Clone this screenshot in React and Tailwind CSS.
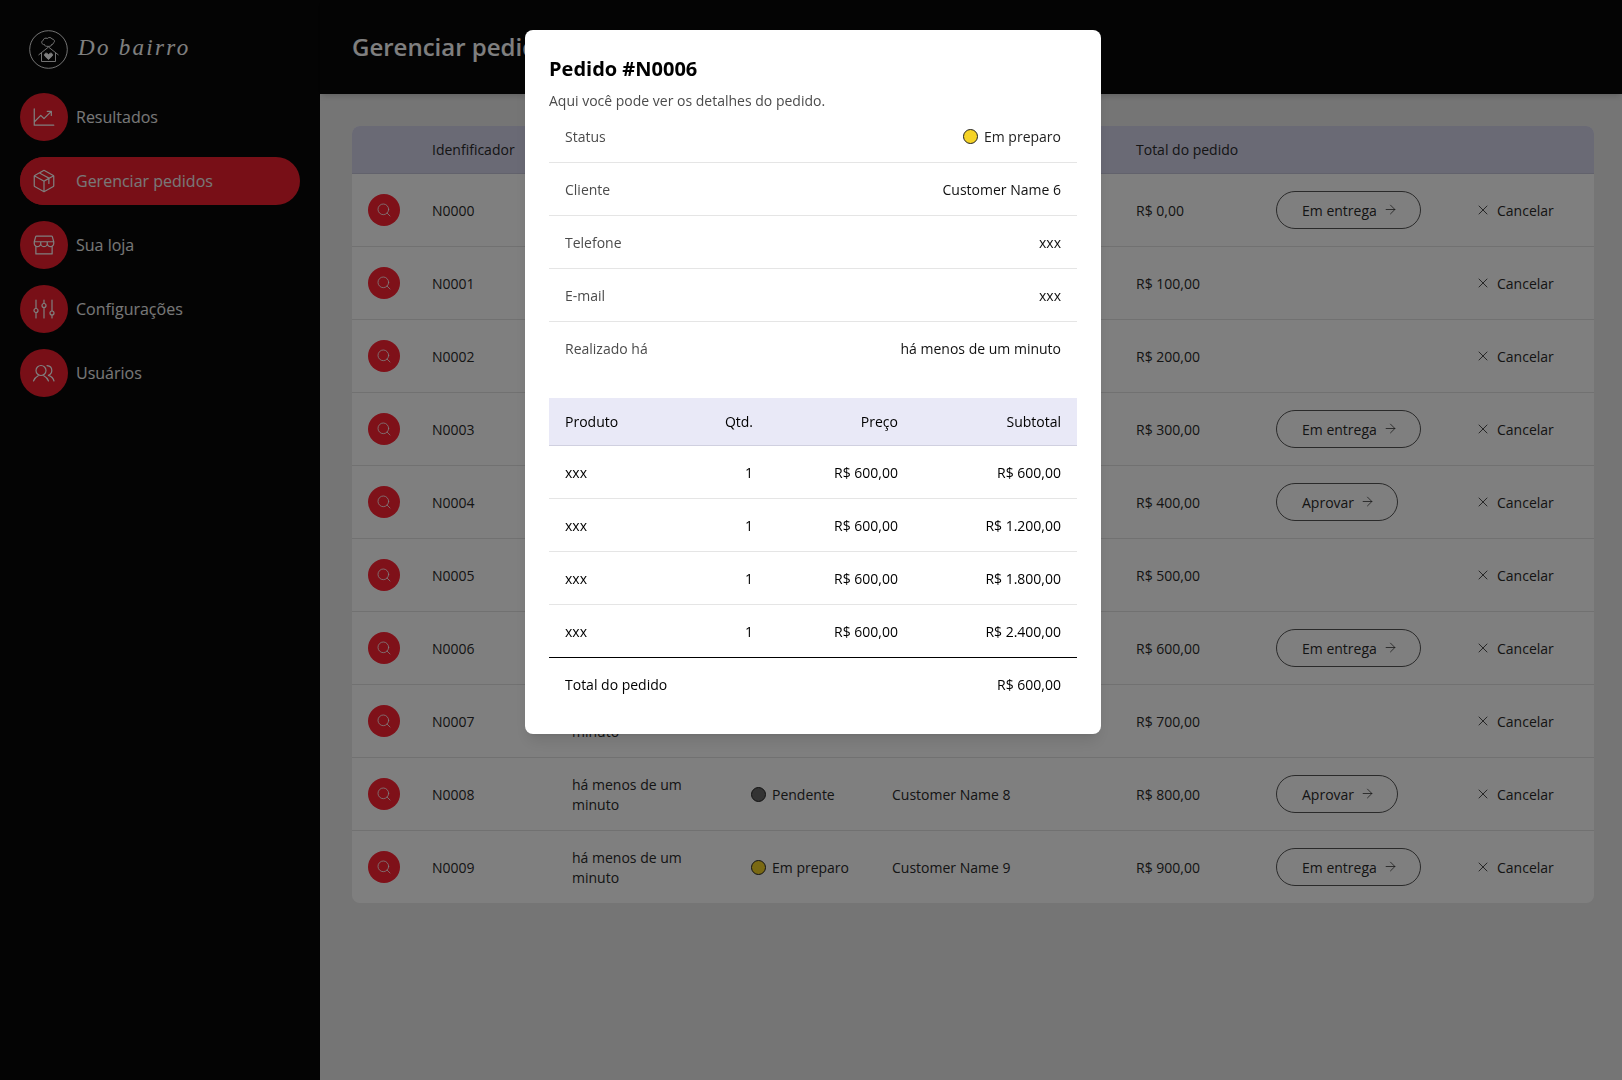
import React from "react";
import { Search, X, ArrowRight } from "lucide-react";
import { PiChartLineUpLight, PiPackageLight, PiStorefrontLight } from "react-icons/pi";

function SlidersIcon() {
  return (
    <svg width="24" height="24" viewBox="0 0 24 24" fill="none" stroke="currentColor" strokeWidth="1.2" strokeLinecap="round">
      <path d="M4 3v8.500M4 15.500V21M12 3v3.500M12 10.500V21M20 3v11M20 18v3" />
      <circle cx="4" cy="13.500" r="2" />
      <circle cx="12" cy="8.500" r="2" />
      <circle cx="20" cy="16" r="2" />
    </svg>
  );
}

function UsersIcon() {
  return (
    <svg width="24" height="24" viewBox="0 0 24 24" fill="none" stroke="currentColor" strokeWidth="1.2" strokeLinecap="round" strokeLinejoin="round">
      <circle cx="9" cy="9.500" r="5" />
      <path d="M1.500 20c.8-2.600 3-4.400 4.700-5.300M16.500 20c-.8-2.600-3-4.400-4.700-5.300" />
      <path d="M15 4.600c2.800.2 4.800 2.300 4.800 4.900 0 2.200-1.400 4-3.400 4.800 2.700.8 4.900 2.700 5.600 5.700" />
    </svg>
  );
}

const navItems = [
  { label: "Resultados", icon: <PiChartLineUpLight size={26} /> },
  { label: "Gerenciar pedidos", icon: <PiPackageLight size={26} />, active: true },
  { label: "Sua loja", icon: <PiStorefrontLight size={26} /> },
  { label: "Configurações", icon: <SlidersIcon /> },
  { label: "Usuários", icon: <UsersIcon /> },
];

const orders = [
  { id: "N0000", status: "Em preparo", action: "Em entrega", total: "R$ 0,00", name: "Customer Name 0" },
  { id: "N0001", status: "Cancelado", action: null, total: "R$ 100,00", name: "Customer Name 1" },
  { id: "N0002", status: "Cancelado", action: null, total: "R$ 200,00", name: "Customer Name 2" },
  { id: "N0003", status: "Em preparo", action: "Em entrega", total: "R$ 300,00", name: "Customer Name 3" },
  { id: "N0004", status: "Pendente", action: "Aprovar", total: "R$ 400,00", name: "Customer Name 4" },
  { id: "N0005", status: "Cancelado", action: null, total: "R$ 500,00", name: "Customer Name 5" },
  { id: "N0006", status: "Em preparo", action: "Em entrega", total: "R$ 600,00", name: "Customer Name 6" },
  { id: "N0007", status: "Cancelado", action: null, total: "R$ 700,00", name: "Customer Name 7" },
  { id: "N0008", status: "Pendente", action: "Aprovar", total: "R$ 800,00", name: "Customer Name 8" },
  { id: "N0009", status: "Em preparo", action: "Em entrega", total: "R$ 900,00", name: "Customer Name 9" },
];

const details = [
  ["Cliente", "Customer Name 6"],
  ["Telefone", "xxx"],
  ["E-mail", "xxx"],
];

const items = [
  { subtotal: "R$ 600,00" },
  { subtotal: "R$ 1.200,00" },
  { subtotal: "R$ 1.800,00" },
  { subtotal: "R$ 2.400,00" },
];

const tableCols = "grid grid-cols-[64px_140px_179px_141px_244px_140px_202px_132px] items-center";
const itemCols = "grid grid-cols-[140px_80px_145px_163px] items-center";

function Logo() {
  return (
    <div className="flex h-[93px] items-center pl-[29px] pt-[5px]">
      <svg width="39" height="39" viewBox="0 0 39 39" fill="none" stroke="#ffffff" strokeWidth="0.9">
        <circle cx="19.500" cy="19.500" r="18.800" />
        <path d="M14.500 14.500c-2.200-.6-2.400-3.400-.4-4 .2-2 2.600-3 4.200-2 1.200-1.600 4.200-1.200 4.800.6 2.200-.2 3.400 2.800 1.200 4-.2 1-.8 1.400-1.600 1.400" />
        <path d="M15 14c0 1.600 1.600 2.400 4.200 2.400s3.800-.8 3.800-2.400" />
        <path d="M9.500 25l10-8 10 8" />
        <path d="M12.500 22.800V31.500h14v-8.700" />
        <path d="M19.500 29.500l-3.600-3.400c-1.600-1.800.9-4 2.600-2.400l1 .9 1-.9c1.700-1.600 4.200.6 2.600 2.400z" fill="#ffffff" />
      </svg>
      <span className="-mt-[3px] ml-[10px] font-['Liberation_Serif'] text-[23px] font-normal italic leading-none tracking-[0.1em] text-white">
        Do bairro
      </span>
    </div>
  );
}

function Sidebar() {
  return (
    <aside className="w-[320px] shrink-0 bg-[#090909]">
      <Logo />
      <nav className="flex flex-col gap-4 pl-5">
        {navItems.map((item) => (
          <div
            key={item.label}
            className={`flex h-12 items-center rounded-full ${item.active ? "w-[280px] bg-[#f01f2e]" : "w-fit"}`}
          >
            <span className="flex h-12 w-12 items-center justify-center rounded-full bg-[#f01f2e] text-white">
              {item.icon}
            </span>
            <span className="ml-2 text-base text-[#f0f0f0]">{item.label}</span>
          </div>
        ))}
      </nav>
    </aside>
  );
}

function StatusDot({ status }) {
  const color =
    status === "Em preparo" ? "bg-[#f5d327]" : status === "Pendente" ? "bg-[#666666]" : "bg-[#e02424]";
  return <span className={`h-[15px] w-[15px] shrink-0 rounded-full border border-[#222] ${color}`} />;
}

function OrdersTable() {
  return (
    <div className="overflow-hidden rounded-lg bg-white text-sm text-[#2a2a2a]">
      <div className={`${tableCols} h-[48px] border-b border-[#c4c4d8] bg-[#d4d4ea]`}>
        <div />
        <div className="px-4">Idenfificador</div>
        <div className="px-4">Realizado há</div>
        <div className="px-4">Status</div>
        <div className="px-4">Cliente</div>
        <div className="px-4">Total do pedido</div>
        <div />
        <div />
      </div>
      {orders.map((order, i) => (
        <div
          key={order.id}
          className={`${tableCols} pt-[1px] ${i < orders.length - 1 ? "h-[73px] border-b border-[#e2e2e2]" : "h-[72px]"}`}
        >
          <div className="-mt-[2px] pl-4">
            <span className="flex h-8 w-8 items-center justify-center rounded-full bg-[#ff2233] text-white">
              <Search size={16} strokeWidth={1.2} />
            </span>
          </div>
          <div className="px-4">{order.id}</div>
          <div className="px-4 leading-5">há menos de um minuto</div>
          <div className="flex items-center gap-[6px] px-4">
            <StatusDot status={order.status} />
            {order.status}
          </div>
          <div className="px-4">{order.name}</div>
          <div className="px-4">{order.total}</div>
          <div className="-mt-[2px] px-4">
            {order.action && (
              <button className="inline-flex h-[38px] items-center gap-[6px] rounded-full border border-[#555] pl-[25px] pr-[22px] pt-[2px]">
                {order.action}
                <ArrowRight size={15} strokeWidth={1.2} className="-mt-[2px]" />
              </button>
            )}
          </div>
          <div className="flex items-center gap-[6px] pl-[13px]">
            <X size={16} strokeWidth={1.25} className="-mt-[2px]" />
            Cancelar
          </div>
        </div>
      ))}
    </div>
  );
}

function OrderModal() {
  return (
    <div className="fixed inset-0 bg-black/50">
      <div className="absolute left-[525px] top-[30px] w-[576px] rounded-lg bg-white px-6 pb-[23px] pt-[25px] text-sm text-black shadow-lg">
        <h2 className="text-xl font-bold leading-7">Pedido #N0006</h2>
        <p className="mt-2 text-[#4b4b4b]">Aqui você pode ver os detalhes do pedido.</p>

        <div className="flex h-[52px] items-center justify-between border-b border-[#e5e5e5] px-4">
          <span className="text-[#4b4b4b]">Status</span>
          <span className="flex items-center gap-[6px] text-[#222]">
            <StatusDot status="Em preparo" />
            Em preparo
          </span>
        </div>
        {details.map(([label, value]) => (
          <div key={label} className="flex h-[53px] items-center justify-between border-b border-[#e5e5e5] px-4 pt-[1px]">
            <span className="text-[#4b4b4b]">{label}</span>
            <span className="text-[#111]">{value}</span>
          </div>
        ))}
        <div className="flex h-[53px] items-center justify-between px-4">
          <span className="text-[#4b4b4b]">Realizado há</span>
          <span className="text-[#111]">há menos de um minuto</span>
        </div>

        <div className={`${itemCols} mt-[23px] h-12 border-b border-[#d0d0e0] bg-[#e9e9f7]`}>
          <div className="px-4">Produto</div>
          <div className="px-4 text-right">Qtd.</div>
          <div className="px-4 text-right">Preço</div>
          <div className="px-4 text-right">Subtotal</div>
        </div>
        {items.map((item, i) => (
          <div
            key={item.subtotal}
            className={`${itemCols} h-[53px] border-b pt-[1px] ${i === items.length - 1 ? "border-black" : "border-[#e5e5e5]"}`}
          >
            <div className="px-4">xxx</div>
            <div className="px-4 text-right">1</div>
            <div className="px-4 text-right">R$ 600,00</div>
            <div className="px-4 text-right">{item.subtotal}</div>
          </div>
        ))}
        <div className="flex h-[53px] items-center justify-between px-4">
          <span>Total do pedido</span>
          <span>R$ 600,00</span>
        </div>
      </div>
    </div>
  );
}

export default function App() {
  return (
    <div className="flex h-[1080px] overflow-hidden bg-[#ebebeb] font-['Open_Sans',sans-serif]">
      <Sidebar />
      <main className="flex-1">
        <header className="flex h-[94px] items-center bg-[#090909] pl-8 shadow-md">
          <h1 className="text-2xl font-semibold text-[#fff]">Gerenciar pedidos</h1>
        </header>
        <div className="pl-8 pr-7 pt-8">
          <OrdersTable />
        </div>
      </main>
      <OrderModal />
    </div>
  );
}
